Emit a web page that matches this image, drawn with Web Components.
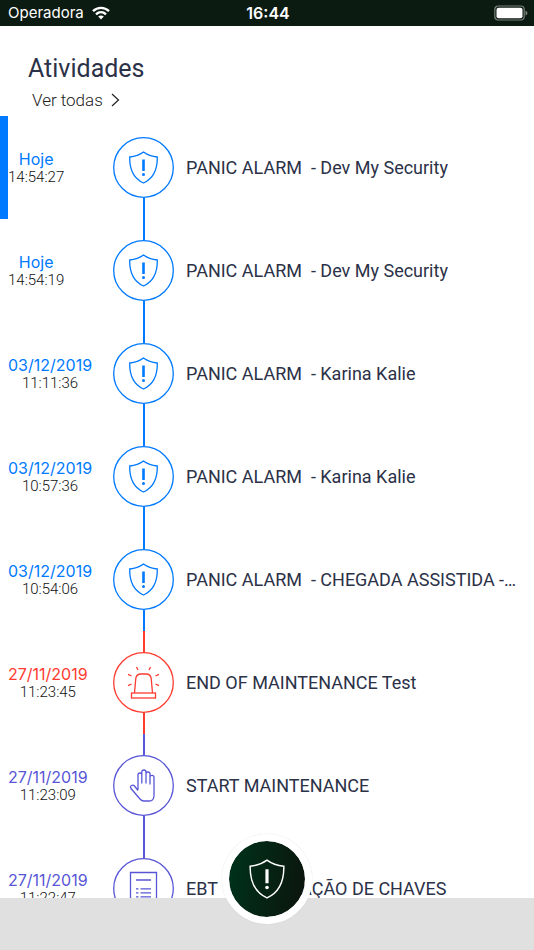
<!DOCTYPE html>
<html lang="pt-BR">
<head>
<meta charset="utf-8">
<meta name="viewport" content="width=device-width, initial-scale=1">
<title>Atividades</title>
<style>
    :root {
        --bar-color: #0c1b12;
        --text-color: #2b3147;
        --blue: #007aff;
        --red: #ff3b30;
        --purple: #5856d6;
    }
    body {
        margin: 0;
        background: #fff;
        color: var(--text-color);
        font-family: Roboto, "Liberation Sans", sans-serif;
    }
</style>
</head>
<body>
<activity-app>
    <status-bar slot="status" carrier="Operadora" time="16:44"></status-bar>
    <section-header slot="header" title="Atividades" link="Ver todas"></section-header>
    <activity-item date="Hoje" time="14:54:27" type="panic" selected>PANIC ALARM  - Dev My Security</activity-item>
    <activity-item date="Hoje" time="14:54:19" type="panic">PANIC ALARM  - Dev My Security</activity-item>
    <activity-item date="03/12/2019" time="11:11:36" type="panic">PANIC ALARM  - Karina Kalie</activity-item>
    <activity-item date="03/12/2019" time="10:57:36" type="panic">PANIC ALARM  - Karina Kalie</activity-item>
    <activity-item date="03/12/2019" time="10:54:06" type="panic">PANIC ALARM  - CHEGADA ASSISTIDA -…</activity-item>
    <activity-item date="27/11/2019" time="11:23:45" type="siren">END OF MAINTENANCE Test</activity-item>
    <activity-item date="27/11/2019" time="11:23:09" type="hand">START MAINTENANCE</activity-item>
    <activity-item date="27/11/2019" time="11:22:47" type="report">EBT  - SOLICITAÇÃO DE CHAVES</activity-item>
    <panic-button slot="action" label="Pânico"></panic-button>
</activity-app>

<script>
const ICONS = {
    panic: `
        <path d="M20.500 5C16.500 8 12 9.500 6.700 10C6.500 22.500 10.500 31.500 20.500 36C30.500 31.500 34.500 22.500 34.300 10C29 9.500 24.500 8 20.500 5Z"/>
        <path d="M20.500 12.500v11.500" stroke-width="2.600"/>
        <circle cx="20.500" cy="27.500" r="1.500" fill="currentColor" stroke="none"/>`,
    siren: `
        <path d="M11.500 31 12.800 16.500Q13.400 12 18 12H23Q27.600 12 28.200 16.500L29.500 31"/>
        <rect x="8.500" y="31" width="24" height="5"/>
        <path d="M13.500 5 15 8M27.500 5 26 8M5 12.300 8.500 14M36 12.300 32.500 14M5 23.700 8.500 22M36 23.700 32.500 22"/>`,
    hand: `
        <path d="M15 24.500V10Q15 8 16.900 8T18.800 10V18.500M18.800 16V7Q18.800 5 20.900 5T23 7V18.500M23 16V8.800Q23 7 25 7T27 9V19.500M27 16V12Q27 10.300 29 10.300T31 12.300V31Q30.500 36 26.500 36H21Q18.500 36 17 34L8 23.500Q6.800 21.500 8.500 20.500T11.500 21L15 25.500"/>`,
    report: `
        <path d="M7.500 36.500V4.500H33.500V36.500ZM13 12H28M13 20.800H15.500M17.500 20.800H28M13 24.800H15.500M17.500 24.800H28M13 28.800H15.500M17.500 28.800H28"/>`
};

const COLORS = {
    panic: 'var(--blue)',
    siren: 'var(--red)',
    hand: 'var(--purple)',
    report: 'var(--purple)'
};

class ActivityApp extends HTMLElement {
    connectedCallback() {
        this.attachShadow({ mode: 'open' }).innerHTML = `
        <style>
            :host {
                display: flex;
                flex-direction: column;
                height: 100vh;
                overflow: hidden;
            }
            main {
                flex: 1;
                min-height: 0;
                overflow: hidden;
            }
            footer {
                position: relative;
                flex: none;
                height: 52px;
                background: #e0e0e0;
            }
            /* the action button floats over the end of the list */
            ::slotted([slot="action"]) {
                position: absolute;
                left: 50%;
                bottom: 26px;
                transform: translateX(-50%);
            }
        </style>
        <slot name="status"></slot>
        <main>
            <slot name="header"></slot>
            <div role="list"><slot></slot></div>
        </main>
        <footer><slot name="action"></slot></footer>
        `;
    }
}

class StatusBar extends HTMLElement {
    connectedCallback() {
        this.attachShadow({ mode: 'open' }).innerHTML = `
        <style>
            :host {
                display: grid;
                grid-template-columns: 1fr auto 1fr;
                align-items: center;
                flex: none;
                height: 26px;
                padding: 0 6px 0 8px;
                background: var(--bar-color);
                color: #fff;
                font-family: Inter, "Liberation Sans", sans-serif;
                font-size: 15px;
                line-height: 26px;
            }
            .carrier {
                display: flex;
                align-items: center;
                gap: 8px;
            }
            .time {
                font-size: 16px;
                font-weight: 600;
            }
            .battery {
                justify-self: end;
            }
            svg {
                display: block;
            }
        </style>
        <div class="carrier">
            <span>${this.getAttribute('carrier')}</span>
            <svg width="18" height="14" viewBox="0 0 18 14" fill="none" stroke="#fff" stroke-width="2.400">
                <path d="M1 5.200C5.500.8 12.500.8 17 5.200M4 8.300C6.900 5.600 11.100 5.600 14 8.300"/>
                <path d="M6.200 10.600C7.800 9.200 10.200 9.200 11.800 10.600L9 13.500Z" fill="#fff" stroke="none"/>
            </svg>
        </div>
        <span class="time">${this.getAttribute('time')}</span>
        <svg class="battery" width="34" height="16" viewBox="0 0 34 16">
            <rect x=".8" y="1" width="29.400" height="14" rx="3.500" fill="none" stroke="#77807a" stroke-width="1.200"/>
            <rect x="2.500" y="2.700" width="26" height="10.600" rx="2" fill="#fff"/>
            <path d="M31.500 5.500Q33.500 6.500 33.500 8T31.500 10.500Z" fill="#77807a"/>
        </svg>
        `;
    }
}

class SectionHeader extends HTMLElement {
    connectedCallback() {
        this.attachShadow({ mode: 'open' }).innerHTML = `
        <style>
            :host {
                display: block;
                padding: 28px 28px 0;
            }
            h1 {
                margin: 0;
                font-size: 25px;
                font-weight: 400;
                line-height: 30px;
            }
            a {
                display: flex;
                align-items: center;
                gap: 8px;
                width: fit-content;
                margin-left: 4px;
                color: #222;
                font-size: 17px;
                font-weight: 300;
                line-height: 32px;
                text-decoration: none;
            }
        </style>
        <h1>${this.getAttribute('title')}</h1>
        <a href="#todas">
            ${this.getAttribute('link')}
            <svg width="10" height="14" viewBox="0 0 10 14" fill="none" stroke="#222" stroke-width="1.200">
                <path d="M1 1 7.500 7 1 13"/>
            </svg>
        </a>
        `;
    }
}

class ActivityItem extends HTMLElement {
    connectedCallback() {
        const type = this.getAttribute('type');
        this.setAttribute('role', 'listitem');

        this.attachShadow({ mode: 'open' }).innerHTML = `
        <style>
            :host {
                --accent: ${COLORS[type]};
                display: flex;
                height: 103px;
                gap: 12px;
                padding-right: 12px;
                border-left: 8px solid transparent;
            }
            :host([selected]) {
                border-left-color: var(--accent);
            }
            .when {
                display: flex;
                align-items: center;
                width: 93px;
                flex: none;
            }
            time {
                display: block;
                text-align: center;
                color: #111;
                font-size: 15px;
                font-weight: 300;
                line-height: 18px;
            }
            .date {
                display: block;
                color: var(--accent);
                font-family: Inter, "Liberation Sans", sans-serif;
                font-size: 16px;
                font-weight: 400;
            }
            .track {
                display: flex;
                flex-direction: column;
                align-items: center;
                flex: none;
                color: var(--accent);
            }
            .line {
                flex: 1;
                border-left: 2px solid currentColor;
            }
            /* nothing comes before the newest entry */
            :host(:first-of-type) .line:first-child {
                border-color: transparent;
            }
            .badge {
                display: block;
            }
            p {
                align-self: center;
                flex: 1;
                min-width: 0;
                margin: 0;
                overflow: hidden;
                white-space: pre;
                text-overflow: ellipsis;
                font-size: 18px;
                line-height: 24px;
            }
        </style>
        <div class="when">
            <time>
                <span class="date">${this.getAttribute('date')}</span>
                ${this.getAttribute('time')}
            </time>
        </div>
        <div class="track">
            <div class="line"></div>
            <svg class="badge" width="61" height="61" viewBox="0 0 61 61" fill="none" stroke="currentColor" stroke-width="1.300">
                <circle cx="30.500" cy="30.500" r="29.800"/>
                <g transform="translate(10 10)">${ICONS[type]}</g>
            </svg>
            <div class="line"></div>
        </div>
        <p><slot></slot></p>
        `;
    }
}

class PanicButton extends HTMLElement {
    connectedCallback() {
        this.attachShadow({ mode: 'open' }).innerHTML = `
        <style>
            :host {
                display: block;
            }
            button {
                display: grid;
                place-items: center;
                box-sizing: border-box;
                width: 90px;
                height: 90px;
                padding: 0;
                border: 7px solid #fff;
                border-radius: 50%;
                background: linear-gradient(100deg, #003019 10%, #0b170e 90%) padding-box;
                color: #fff;
                box-shadow: 0 0 1px #bbb;
            }
        </style>
        <button type="button" aria-label="${this.getAttribute('label')}">
            <svg width="50" height="50" viewBox="0 0 41 41" fill="none" stroke="currentColor" stroke-width="1.200">${ICONS.panic}</svg>
        </button>
        `;
    }
}

customElements.define('activity-app', ActivityApp);
customElements.define('status-bar', StatusBar);
customElements.define('section-header', SectionHeader);
customElements.define('activity-item', ActivityItem);
customElements.define('panic-button', PanicButton);
</script>
</body>
</html>
